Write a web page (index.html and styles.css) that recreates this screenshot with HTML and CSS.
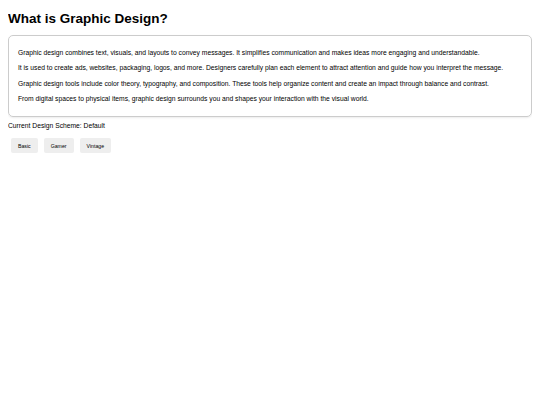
FILE: index.html
```html
<!DOCTYPE html>
<html>
<head>
<meta charset="utf-8">
<link rel="stylesheet" href="styles.css">
</head>
<body>
<h1 class="title">What is Graphic Design?</h1>
<div class="card">
  <p>Graphic design combines text, visuals, and layouts to convey messages. It simplifies communication and makes ideas more engaging and understandable.</p>
  <p>It is used to create ads, websites, packaging, logos, and more. Designers carefully plan each element to attract attention and guide how you interpret the message.</p>
  <p>Graphic design tools include color theory, typography, and composition. These tools help organize content and create an impact through balance and contrast.</p>
  <p>From digital spaces to physical items, graphic design surrounds you and shapes your interaction with the visual world.</p>
</div>
<p class="scheme">Current Design Scheme: Default</p>
<div class="buttons">
  <button class="btn">Basic</button>
  <button class="btn">Gamer</button>
  <button class="btn">Vintage</button>
</div>
</body>
</html>
```
FILE: styles.css
```css
body {
  margin: 8px;
  font-family: "Liberation Sans", Arial, sans-serif;
  color: #000;
  background: #fff;
}
.title {
  font-size: 13.5px;
  line-height: 16px;
  font-weight: bold;
  margin: 3px 0 8px;
}
.card {
  border: 1px solid #ccc;
  border-radius: 5px;
  padding: 6px 9px;
  box-shadow: 0 1px 2px rgba(0,0,0,0.08);
}
.card p {
  font-size: 6.74px;
  line-height: 8.3px;
  margin: 7px 0;
}
.scheme {
  font-size: 6.74px;
  line-height: 8.3px;
  margin: 5px 0 8px;
}
.buttons {
  display: flex;
  gap: 6px;
  padding-left: 3px;
}
.btn {
  font-family: "Liberation Sans", Arial, sans-serif;
  font-size: 5.2px;
  line-height: 6px;
  background: #eee;
  border: none;
  border-radius: 2px;
  padding: 4.5px 7px;
  color: #000;
}
```
